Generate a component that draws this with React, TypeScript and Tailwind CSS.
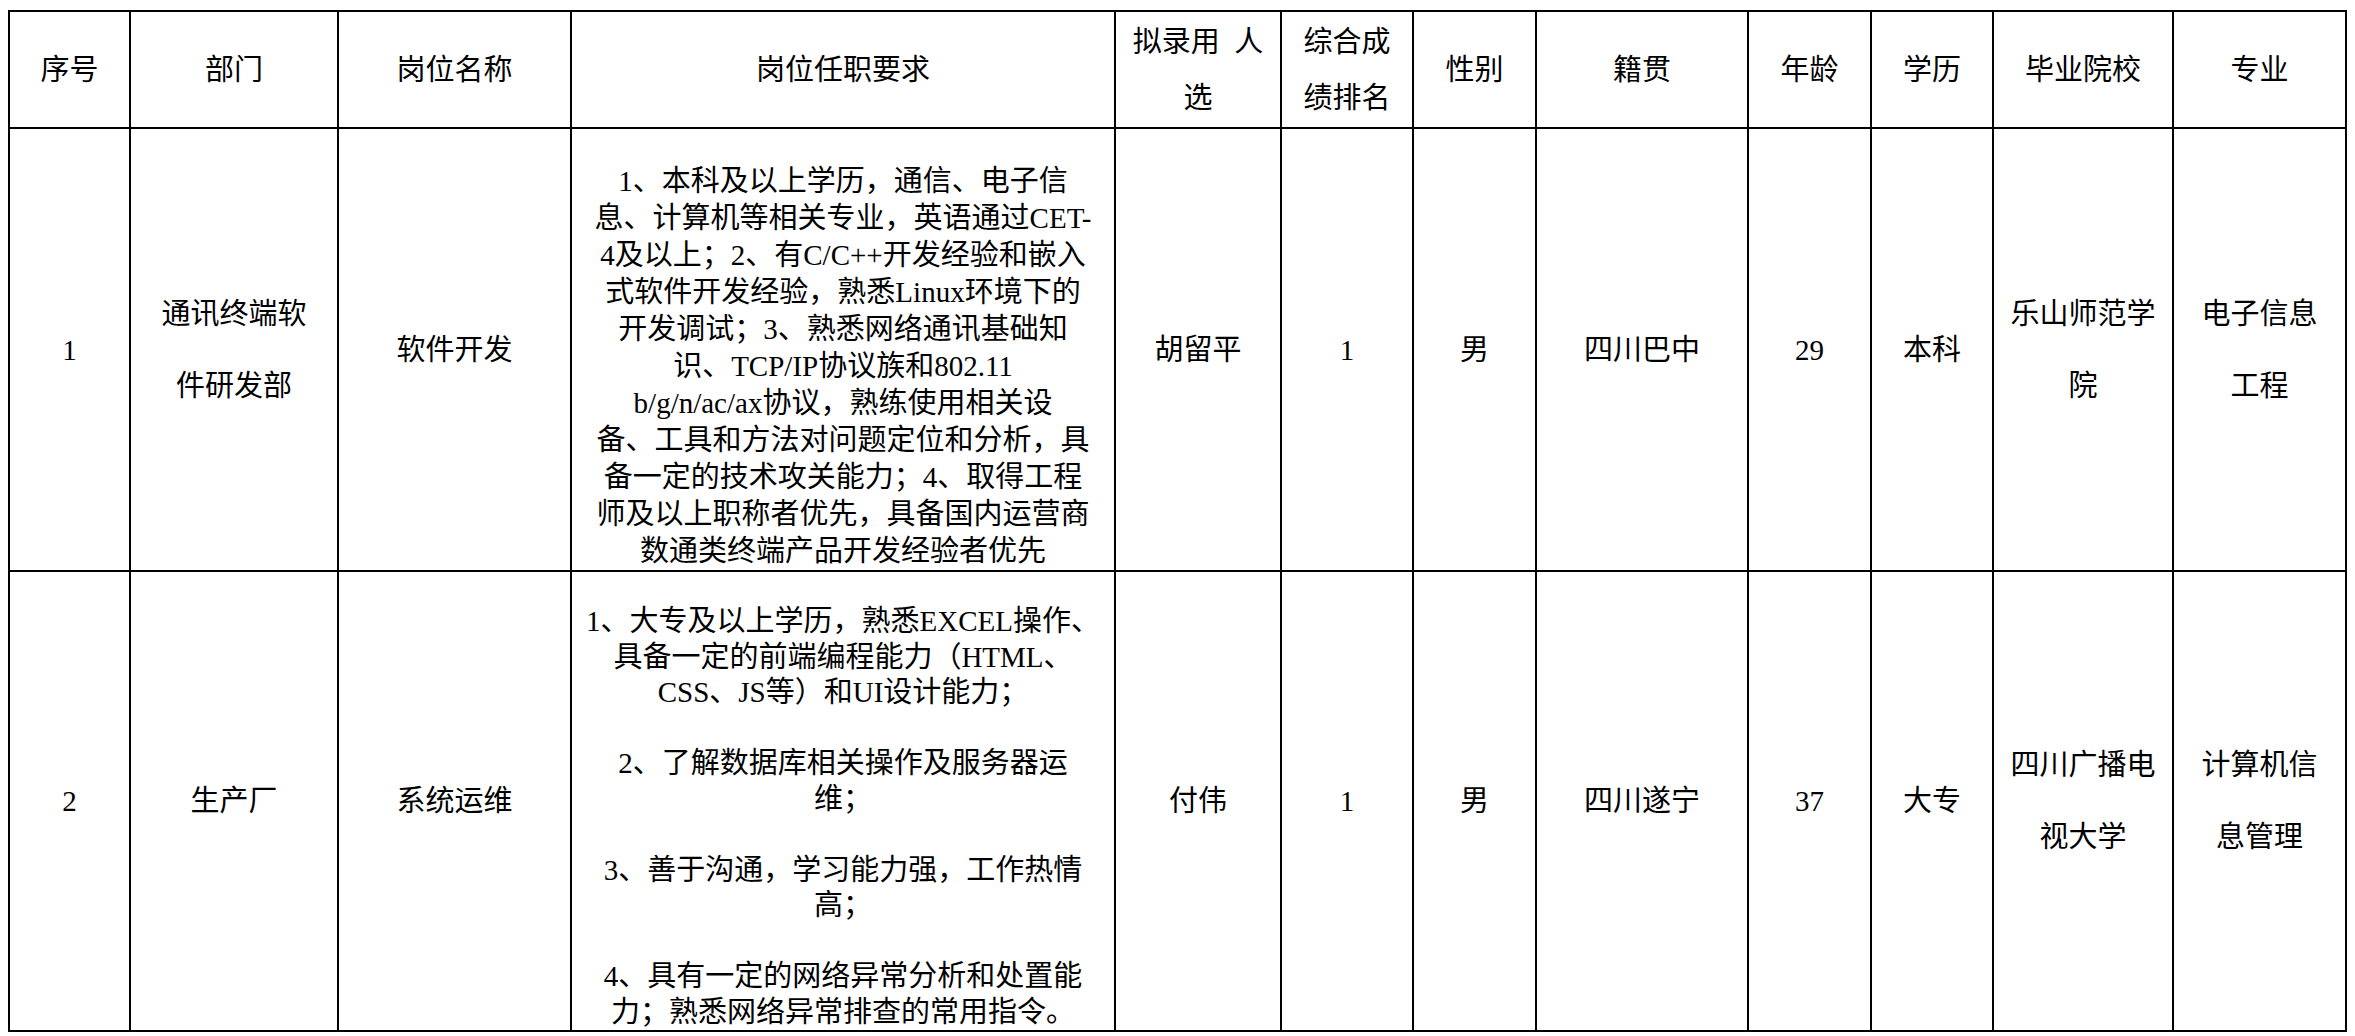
import React from "react"

const headers: string[][] = [
  ["序号"],
  ["部门"],
  ["岗位名称"],
  ["岗位任职要求"],
  ["拟录用\u2002人", "选"],
  ["综合成", "绩排名"],
  ["性别"],
  ["籍贯"],
  ["年龄"],
  ["学历"],
  ["毕业院校"],
  ["专业"],
]

const req1 = [
  "1、本科及以上学历，通信、电子信",
  "息、计算机等相关专业，英语通过CET-",
  "4及以上；2、有C/C++开发经验和嵌入",
  "式软件开发经验，熟悉Linux环境下的",
  "开发调试；3、熟悉网络通讯基础知",
  "识、TCP/IP协议族和802.11",
  "b/g/n/ac/ax协议，熟练使用相关设",
  "备、工具和方法对问题定位和分析，具",
  "备一定的技术攻关能力；4、取得工程",
  "师及以上职称者优先，具备国内运营商",
  "数通类终端产品开发经验者优先",
]

const req2 = [
  "1、大专及以上学历，熟悉EXCEL操作、",
  "具备一定的前端编程能力（HTML、",
  "CSS、JS等）和UI设计能力；",
  "",
  "2、了解数据库相关操作及服务器运",
  "维；",
  "",
  "3、善于沟通，学习能力强，工作热情",
  "高；",
  "",
  "4、具有一定的网络异常分析和处置能",
  "力；熟悉网络异常排查的常用指令。",
]

const rows = [
  {
    cells: [["1"], ["通讯终端软", "件研发部"], ["软件开发"]],
    req: req1,
    rest: [["胡留平"], ["1"], ["男"], ["四川巴中"], ["29"], ["本科"], ["乐山师范学", "院"], ["电子信息", "工程"]],
  },
  {
    cells: [["2"], ["生产厂"], ["系统运维"]],
    req: req2,
    rest: [["付伟"], ["1"], ["男"], ["四川遂宁"], ["37"], ["大专"], ["四川广播电", "视大学"], ["计算机信", "息管理"]],
  },
]

function Cell({ lines, header }: { lines: string[]; header?: boolean }) {
  const lh = lines.length > 1 ? (header ? "leading-[56px]" : "leading-[72px]") : "leading-[36px]"
  return (
    <div className={`bg-white flex flex-col items-center justify-center text-center ${lh}`}>
      {lines.map((l, i) => (
        <div key={i} className="whitespace-pre">
          {l}
        </div>
      ))}
    </div>
  )
}

function Requirements({ lines, second }: { lines: string[]; second?: boolean }) {
  return (
    <div
      className={`bg-white overflow-hidden flex flex-col items-center text-center ${
        second ? "pt-[32px] leading-[35.5px]" : "pt-[34px] leading-[37px]"
      }`}
    >
      {lines.map((l, i) => (
        <div key={i} className="whitespace-nowrap">
          {l || "\u00a0"}
        </div>
      ))}
    </div>
  )
}

export default function App() {
  return (
    <div className="w-[2355px] h-[1036px] bg-white pl-[8px] pt-[10px] overflow-hidden text-black text-[29px] font-['Liberation_Serif','Noto_Sans_CJK_SC',serif]">
      <div className="inline-grid bg-black p-[2px] gap-[2px] grid-cols-[119px_206px_231px_542px_164px_130px_121px_210px_121px_120px_178px_171px] grid-rows-[115px_441px_458px]">
        {headers.map((h, i) => (
          <Cell key={"h" + i} lines={h} header />
        ))}
        {rows.map((r, ri) => (
          <React.Fragment key={ri}>
            {r.cells.map((c, i) => (
              <Cell key={"c" + i} lines={c} />
            ))}
            <Requirements lines={r.req} second={ri === 1} />
            {r.rest.map((c, i) => (
              <Cell key={"r" + i} lines={c} />
            ))}
          </React.Fragment>
        ))}
      </div>
    </div>
  )
}
